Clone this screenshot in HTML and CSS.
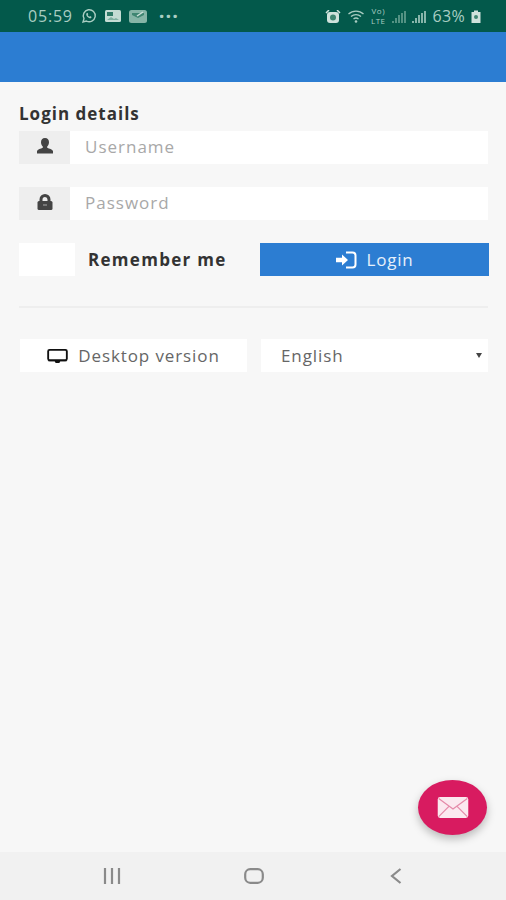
FILE: index.html
```html
<!DOCTYPE html>
<html lang="en">
<head>
  <meta charset="UTF-8">
  <title>Login</title>
  <link rel="stylesheet" href="styles.css">
</head>
<body>

  <div class="status-bar">
    <div class="status-left">
      <span class="clock">05:59</span>
      <svg class="st-icon" width="17" height="17" viewBox="0 0 17 17"><path d="M3 14l1-3.4A6 6 0 1 1 6.400 13z" fill="none" stroke="#a9cdc2" stroke-width="1.400"/><path d="M6.300 5.500c-.6 2.500 2.200 5.200 4.700 4.700l.6-1.300-1.500-.8-.7.6c-.8-.3-1.400-1-1.700-1.700l.6-.7-.8-1.500z" fill="#a9cdc2"/></svg>
      <svg class="st-icon" width="16" height="12" viewBox="0 0 16 12"><rect width="16" height="12" rx="1.500" fill="#c4dcd4"/><rect x="2" y="2" width="6" height="4" fill="#2f7a68"/><path d="M2 10l4-3 3 2 2-1 3 2z" fill="#7fb0a2"/></svg>
      <svg class="st-icon" width="18" height="13" viewBox="0 0 18 13"><rect width="18" height="13" rx="2.500" fill="#86b5a7"/><path d="M3 3h12v2L9 8 3 5z" fill="#3f8672"/><path d="M8 6l6-4" stroke="#cfe2dc" stroke-width="1.500"/></svg>
      <span class="dots">&middot;&middot;&middot;</span>
    </div>
    <div class="status-right">
      <svg class="st-icon" width="16" height="13" viewBox="0 0 14 13"><rect x="1" y="2" width="12" height="11" rx="3" fill="#cfe2dc"/><circle cx="7" cy="7.500" r="3" fill="#3f8672"/><path d="M0 3l3-3M14 3l-3-3" stroke="#cfe2dc" stroke-width="1.500"/></svg>
      <svg class="st-icon" width="20" height="13" viewBox="0 0 19 13"><path d="M1 4a11 11 0 0 1 15 0M3.500 6.500a7.500 7.500 0 0 1 10 0M6 9a4 4 0 0 1 5 0" fill="none" stroke="#a9cdc2" stroke-width="1.300"/><circle cx="8.500" cy="11.500" r="1.300" fill="#a9cdc2"/></svg>
      <span class="volte">Vo)<br>LTE</span>
      <svg class="st-icon" width="14" height="13" viewBox="0 0 14 13"><path d="M1 13V11M4 13V8M7 13V5M10 13V3M13 13V1" stroke="#6fa596" stroke-width="1.500"/></svg>
      <svg class="st-icon" width="14" height="13" viewBox="0 0 14 13"><path d="M1 13V11M4 13V8M7 13V5M10 13V3M13 13V1" stroke="#b4d3ca" stroke-width="1.500"/></svg>
      <span class="battery-text">63%</span>
      <svg class="st-icon" width="10" height="14" viewBox="0 0 10 14"><path d="M3 1.500h4V3h2.500v11H.5V3H3z" fill="#cfe2dc"/><circle cx="5" cy="8" r="2" fill="#3f8672"/></svg>
    </div>
  </div>

  <div class="app-bar"></div>

  <div class="content">
    <div class="section-title">Login details</div>

    <div class="input-row">
      <span class="addon">
        <svg width="18" height="16" viewBox="0 0 18 16"><path d="M9 0c2.700 0 4 1.800 4 4.200 0 1.900-.8 3.400-1.800 4.300v1.300c2 .8 5.300 1.700 5.800 3.200V15.500H1V13c.5-1.500 3.800-2.400 5.800-3.200V8.500C5.800 7.600 5 6.100 5 4.200 5 1.800 6.300 0 9 0z" fill="#444"/></svg>
      </span>
      <span class="field placeholder">Username</span>
    </div>

    <div class="input-row">
      <span class="addon">
        <svg width="18" height="17" viewBox="0 0 18 17"><path d="M3.500 7V5.500a5.500 5.500 0 0 1 11 0V7h-3V5.500a2.500 2.500 0 0 0-5 0V7z" fill="#444"/><rect x="1.500" y="7" width="15" height="9" rx="1.500" fill="#444"/><rect x="7" y="10" width="4" height="2" fill="#777"/></svg>
      </span>
      <span class="field placeholder">Password</span>
    </div>

    <div class="login-row">
      <div class="remember">
        <span class="checkbox"></span>
        <span class="remember-label">Remember me</span>
      </div>
      <button class="btn-login" type="button">
        <svg width="22" height="18" viewBox="0 0 22 18"><path d="M1 6.800h6V3.500L13 9l-6 5.500v-3.300H1z" fill="#fff"/><path d="M11 1.500h6.500a3 3 0 0 1 3 3v9a3 3 0 0 1-3 3H11" fill="none" stroke="#fff" stroke-width="2"/></svg>
        Login
      </button>
    </div>

    <hr class="divider">

    <div class="bottom-row">
      <button class="btn-desktop" type="button">
        <svg width="21" height="14" viewBox="0 0 22 15"><rect x="1" y="1" width="20" height="11" rx="1.500" fill="none" stroke="#111" stroke-width="2"/><path d="M1 12h20v1H14l-1 2H9l-1-2H1z" fill="#111"/></svg>
        Desktop version
      </button>
      <div class="lang-select">
        <span>English</span>
        <span class="caret"></span>
      </div>
    </div>
  </div>

  <button class="fab" type="button">
    <svg width="32" height="21" viewBox="0 0 32 22"><rect width="32" height="22" rx="2.500" fill="#fbe9ef"/><path d="M1 1.500l15 11 15-11M1 20.500l11-11M31 20.500l-11-11" fill="none" stroke="#e58aa8" stroke-width="1.300"/></svg>
  </button>

  <div class="nav-bar">
    <svg width="20" height="16" viewBox="0 0 20 16"><path d="M3 0v16M10 0v16M17 0v16" stroke="#8a8a8a" stroke-width="2.200"/></svg>
    <svg class="nav-home" width="20" height="16" viewBox="0 0 20 16"><rect x="1.200" y="1.200" width="17.600" height="13.600" rx="5" fill="none" stroke="#8a8a8a" stroke-width="2.200"/></svg>
    <svg width="12" height="16" viewBox="0 0 12 16"><path d="M10.500 1L2 8l8.500 7" fill="none" stroke="#8a8a8a" stroke-width="2.200"/></svg>
  </div>

</body>
</html>
```

FILE: styles.css
```css
* {
  box-sizing: border-box;
}
body {
  margin: 0;
  height: 900px;
  font-family: "Open Sans", Arial, sans-serif;
  background-color: #f7f7f7;
  display: flex;
  flex-direction: column;
  position: relative;
  overflow: hidden;
}
svg {
  display: block;
  flex-shrink: 0;
}
.status-bar {
  height: 32px;
  background-color: #03594b;
  color: #a9cdc2;
  display: flex;
  justify-content: space-between;
  align-items: center;
  padding: 0 25px 0 28px;
  font-size: 16px;
}
.status-left, .status-right {
  display: flex;
  align-items: center;
}
.status-left .st-icon {
  margin-left: 7px;
}
.status-left .st-icon + .st-icon {
  margin-left: 8px;
}
.clock {
  letter-spacing: 0.8px;
}
.dots {
  margin-left: 12px;
  font-size: 20px;
  font-weight: bold;
  letter-spacing: 1px;
  line-height: 16px;
}
.status-right .st-icon {
  margin-left: 6px;
}
.volte {
  margin-left: 4px;
  font-size: 8px;
  line-height: 10px;
  letter-spacing: 0.5px;
  text-align: center;
}
.battery-text {
  margin-left: 7px;
  font-size: 16px;
  letter-spacing: 0.3px;
}
.app-bar {
  height: 50px;
  background-color: #2c7dd2;
}
.content {
  flex: 1;
  padding: 22px 18px 0 19px;
}
.section-title {
  font-size: 17px;
  font-weight: 700;
  line-height: 20px;
  color: #333;
  letter-spacing: 1px;
}
.input-row {
  display: flex;
  height: 33px;
  margin-bottom: 23px;
}
.section-title + .input-row {
  margin-top: 7px;
}
.addon {
  width: 51px;
  background-color: #eeeeee;
  display: flex;
  justify-content: center;
  padding-top: 7px;
}
.field {
  flex: 1;
  background-color: #fff;
  padding-left: 15px;
  font-size: 17px;
  line-height: 32px;
  letter-spacing: 1px;
}
.placeholder {
  color: #a8a8a8;
}
.login-row {
  display: flex;
  height: 33px;
  margin-right: -1px;
}
.remember {
  width: 241px;
  display: flex;
  align-items: center;
}
.checkbox {
  width: 56px;
  height: 33px;
  background-color: #fff;
}
.remember-label {
  margin-left: 13px;
  font-size: 17px;
  font-weight: 700;
  color: #333;
  letter-spacing: 1.300px;
}
.btn-login {
  flex: 1;
  border: none;
  background-color: #2c7dd2;
  color: #e6f0fa;
  font-family: inherit;
  font-size: 17px;
  letter-spacing: 0.8px;
  display: flex;
  justify-content: center;
  align-items: center;
  gap: 9px;
  padding: 0;
}
.divider {
  border: none;
  border-top: 2px solid #eeeeee;
  margin: 30px 0 31px;
}
.bottom-row {
  display: flex;
  gap: 14px;
  padding-left: 1px;
}
.btn-desktop {
  width: 227px;
  height: 33px;
  border: none;
  background-color: #fff;
  color: #666;
  font-family: inherit;
  font-size: 17px;
  letter-spacing: 0.9px;
  display: flex;
  justify-content: center;
  align-items: center;
  gap: 10px;
  padding: 0;
}
.lang-select {
  flex: 1;
  height: 33px;
  background-color: #fff;
  color: #666;
  font-size: 17px;
  letter-spacing: 0.9px;
  display: flex;
  justify-content: space-between;
  align-items: center;
  padding: 0 6px 0 20px;
}
.caret {
  width: 0;
  height: 0;
  border-left: 3px solid transparent;
  border-right: 3px solid transparent;
  border-top: 5px solid #444;
}
.fab {
  position: absolute;
  left: 418px;
  top: 780px;
  width: 69px;
  height: 55px;
  border: none;
  border-radius: 50%;
  background-color: #d81b60;
  box-shadow: 0 4px 8px rgba(0,0,0,0.25);
  display: flex;
  justify-content: center;
  align-items: center;
  padding: 0;
}
.nav-bar {
  height: 48px;
  background-color: #f1f1f1;
  display: flex;
  align-items: center;
  padding: 0 104px 0 102px;
  justify-content: space-between;
}
.nav-home {
  margin-right: 5px;
}
```
